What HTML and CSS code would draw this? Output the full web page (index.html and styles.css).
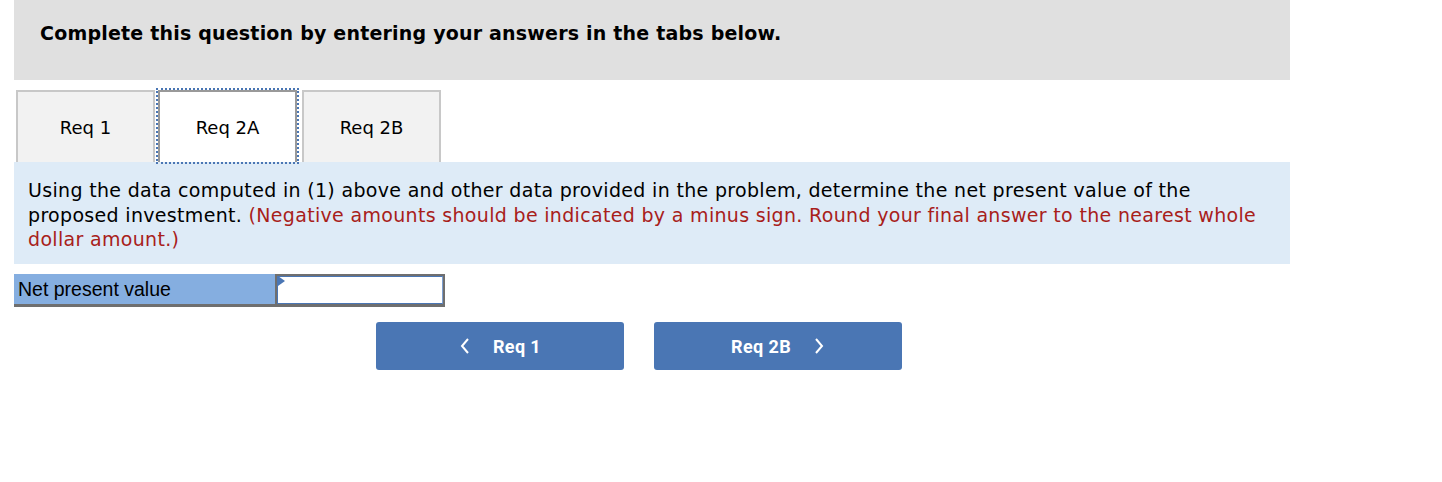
FILE: index.html
```html
<!DOCTYPE html>
<html>
<head>
<meta charset="utf-8">
<link rel="stylesheet" href="styles.css">
</head>
<body>
<div class="page">
  <div class="banner">
    <h1 class="banner-title">Complete this question by entering your answers in the tabs below.</h1>
  </div>
  <div class="tabs">
    <div class="tab">Req 1</div>
    <div class="tab tab-active">Req 2A</div>
    <div class="tab">Req 2B</div>
  </div>
  <div class="prompt">
    Using the data computed in (1) above and other data provided in the problem, determine the net present value of the proposed investment. <span class="note">(Negative amounts should be indicated by a minus sign. Round your final answer to the nearest whole dollar amount.)</span>
  </div>
  <div class="answer-row">
    <div class="answer-label">Net present value</div>
    <div class="answer-cell"><div class="answer-input"><span class="flag"></span></div></div>
  </div>
  <div class="nav">
    <button class="nav-btn"><svg class="chev" width="12" height="18" viewBox="0 0 12 18"><path d="M9 2 L3 9 L9 16" fill="none" stroke="#fff" stroke-width="2"/></svg><span class="nav-text">Req 1</span></button>
    <button class="nav-btn"><span class="nav-text">Req 2B</span><svg class="chev" width="12" height="18" viewBox="0 0 12 18"><path d="M3 2 L9 9 L3 16" fill="none" stroke="#fff" stroke-width="2"/></svg></button>
  </div>
</div>
</body>
</html>
```
FILE: styles.css
```css
html, body { margin: 0; padding: 0; background: #fff; }
.page { padding-left: 14px; width: 1276px; font-family: "DejaVu Sans", Verdana, sans-serif; color: #000; }
.banner { background: #e0e0e0; height: 80px; display: flex; align-items: flex-start; padding: 0 26px; box-sizing: border-box; }
.banner-title { margin: 22px 0 0; font-size: 19px; font-weight: bold; line-height: 22px; letter-spacing: 0.2px; }
.tabs { display: flex; margin-top: 10px; padding-left: 2px; height: 72px; }
.tab { width: 139px; height: 72px; box-sizing: border-box; background: #f2f2f2; border: 2px solid #c8c8c8; border-bottom: none; display: flex; align-items: center; justify-content: center; font-size: 18px; margin-right: 3px; }
.tab-active { background: #fff; border-color: #999; outline: 2px dotted #4a76b4; outline-offset: 0; margin-right: 5px; }
.prompt { background: #deebf7; padding: 16px 20px 12.5px 14px; font-size: 19px; line-height: 24.5px; letter-spacing: 0.32px; }
.note { color: #a8201a; }
.answer-row { display: flex; margin-top: 10px; height: 33px; }
.answer-label { width: 261px; background: #85aee0; border-bottom: 3px solid #6f6f6f; box-sizing: border-box; font-family: "Liberation Sans", Arial, sans-serif; font-size: 19.5px; line-height: 26px; padding: 2px 0 0 4px; }
.answer-cell { width: 170px; box-sizing: border-box; border: 2px solid #6f6f6f; border-bottom-width: 3px; padding: 0; }
.answer-input { position: relative; height: 100%; box-sizing: border-box; border: 1px solid #4a76b4; border-right-color: #7d9fd0; background: #fff; }
.flag { position: absolute; left: 0; top: -1px; width: 0; height: 0; border-top: 5px solid transparent; border-bottom: 5px solid transparent; border-left: 7px solid #4a76b4; }
.nav { display: flex; gap: 30px; margin-top: 15px; padding-left: 362px; }
.nav-btn { width: 248px; height: 48px; background: #4a76b4; border: none; border-radius: 3px; color: #fff; font-family: "Roboto", "Liberation Sans", sans-serif; font-weight: bold; font-size: 18px; letter-spacing: 0.4px; display: flex; align-items: center; justify-content: center; gap: 22px; padding: 0; }
.chev { display: block; }
```
